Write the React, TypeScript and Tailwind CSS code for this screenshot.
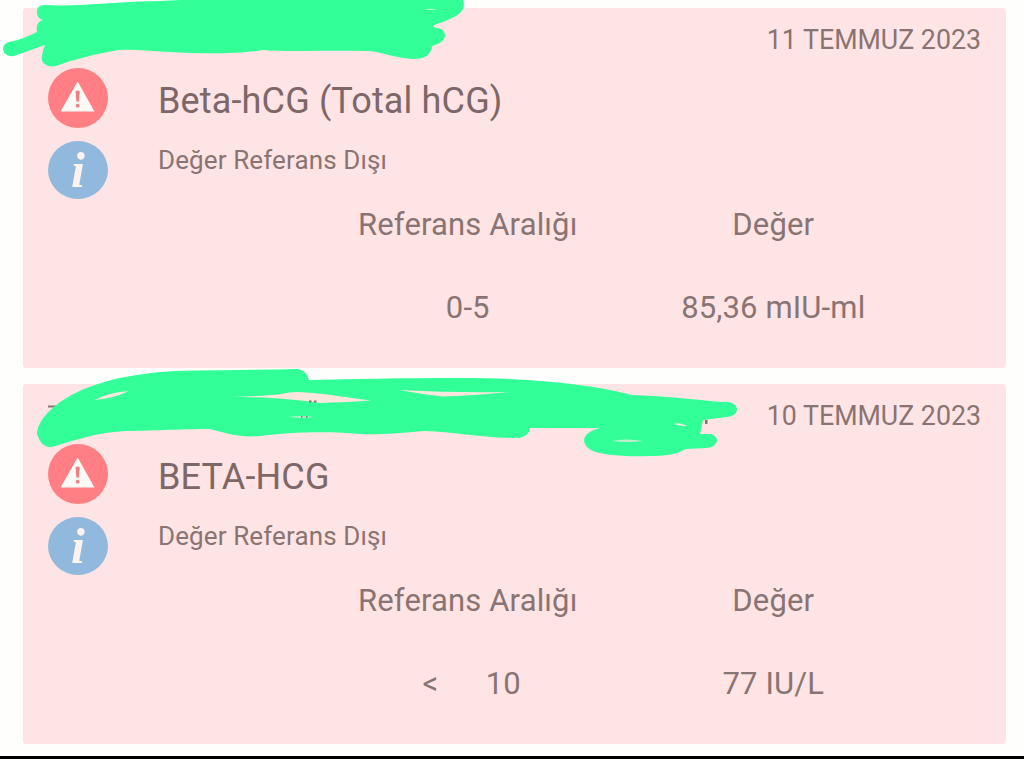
interface LabResult {
  id: number;
  date: string;
  name: string;
  status: string;
  range: string;
  value: string;
}

const results: LabResult[] = [
  {
    id: 1,
    date: "11 TEMMUZ 2023",
    name: "Beta-hCG (Total hCG)",
    status: "Değer Referans Dışı",
    range: "0-5",
    value: "85,36 mIU-ml",
  },
  {
    id: 2,
    date: "10 TEMMUZ 2023",
    name: "BETA-HCG",
    status: "Değer Referans Dışı",
    range: " <\u2003  10",
    value: "77 IU/L",
  },
];

function WarningIcon() {
  return (
    <svg viewBox="0 0 60 60" className="block h-[60px] w-[60px] shrink-0">
      <circle cx="30" cy="30" r="30" fill="#ff7f84" />
      <path d="M29.7 13.5 L46.5 43.5 H12.5 Z" fill="#fffaf5" />
      <path d="M27.6 23.5 Q29.7 21.5 31.8 23.5 L31 33.5 H28.4 Z" fill="#e8807f" />
      <circle cx="29.7" cy="37.7" r="1.9" fill="#e8807f" />
    </svg>
  );
}

function InfoIcon() {
  return (
    <div className="flex h-[58px] w-[60px] shrink-0 items-center justify-center rounded-[50%] bg-[#90b9dd]">
      <span className="font-['Liberation_Serif'] text-[50px] leading-none font-bold text-[#fdf3f1] italic">i</span>
    </div>
  );
}

// Marker strokes hiding the patient details on the first card
function FirstScribble() {
  return (
    <svg viewBox="0 0 1024 80" className="absolute top-0 left-0 h-[80px] w-[1024px]">
      <path
        d="M37 10 Q38 5 45 5 C80 7 120 1 160 1 L180 0 H463 Q466 8 459 14 C450 20 440 23 434 25 Q433 28 438 28 Q445 29 445 36 Q444 43 432 46 C431 55 425 59 413 59 C393 58 380 51 366 51 C330 50 290 52 262 50 C240 54 200 54 170 52 C150 51 130 49 119 50 C95 54 75 59 56 66 Q46 68 42 61 Q41 55 45 45 L14 56 Q5 57 3 50 Q3 43 9 42 C20 40 29 36 37 32 Q35 22 43 20 Q36 18 37 10 Z"
        fill="#33ff99"
      />
      <path d="M425 9.5 Q430 8 437 9.5 Q430 10.5 425 9.5 Z" fill="#b7f5cd" />
    </svg>
  );
}

function SecondScribble() {
  return (
    <svg viewBox="0 360 1024 110" className="absolute top-[360px] left-0 h-[110px] w-[1024px]">
      <path d="M48 406.5 H60" stroke="#8a7474" strokeWidth="2" />
      <path
        d="M37 434 C37 425 44 415 55 406 C80 386 120 374 175 371 C220 370 260 370 298 369 Q307 371 309 380 C350 379 400 378 460 378 C530 378 590 384 632 395 C660 396 690 399 722 402 C732 401 737 405 737 410 Q736 416 727 417 L703 420 L700 434 H711 Q717 436 717 441 Q715 448 706 448 L686 449 C675 455 665 456 650 456 C625 457 600 455 591 450 Q584 446 584 440 Q585 432 600 428 H530 Q529 436 519 438 C480 438 455 432 425 431 C400 433 380 435 360 434 C330 431 290 432 260 436 C240 438 225 433 210 429 C180 429 145 431 125 431 C95 433 75 440 52 447 Q42 449 37 434 Z"
        fill="#33ff99"
      />
      <g fill="#fae6dd">
        <path d="M94 400 Q110 392 129 391 Q112 399 94 400 Z" />
        <path d="M232 397 C250 396 268 396 281 394 Q293 391 306 392.5 C330 394 350 398 371 400.5 Q350 402 320 403 C290 399 270 397 232 397 Z" />
        <path d="M399 390 Q455 393 508 392 Q480 395 443 396.5 Q420 394 399 390 Z" />
        <path d="M288 417 Q301 415 314 417 Q301 418.5 288 417 Z" fill="#b9efcb" />
        <path d="M612 441 Q625 438 643 441 Q630 443 612 441 Z" fill="#c4eecf" />
        <path d="M674 424 Q680 422 687 426 Q680 426.5 674 424 Z" />
      </g>
      <g fill="#87706f">
        <rect x="309" y="400.5" width="2.5" height="2" />
        <rect x="314" y="400.5" width="2.5" height="2" />
        <rect x="301" y="416" width="1.5" height="1.5" />
        <rect x="306" y="416" width="1.5" height="1.5" />
        <rect x="705" y="420" width="2.5" height="4" />
      </g>
    </svg>
  );
}

function ResultCard({ result }: { result: LabResult }) {
  return (
    <div className="h-[360px] rounded-[3px] bg-[#fee4e4] text-[#8a7473]">
      <div className="flex h-[60px] items-center justify-end pt-1 pr-[25px] text-[26.75px]">
        <span>{result.date}</span>
      </div>

      <div className="flex h-[120px] pl-[25px]">
        <div className="flex w-[110px] flex-col gap-[13px]">
          <WarningIcon />
          <InfoIcon />
        </div>
        <div>
          <h2 className="flex h-[66px] items-center text-[36px] tracking-[0.15px] text-[#7d6767]">{result.name}</h2>
          <p className="flex h-[52px] items-center text-[26px] tracking-[0.12px]">{result.status}</p>
        </div>
      </div>

      <div className="ml-[292px] grid w-[611px] grid-cols-2 text-center text-[31px] tracking-[0.14px]">
        <div className="leading-[73px]">Referans Aralığı</div>
        <div className="leading-[73px]">Değer</div>
        <div className="leading-[93px] whitespace-pre">{result.range}</div>
        <div className="leading-[93px]">{result.value}</div>
      </div>
    </div>
  );
}

export default function App() {
  return (
    <div className="relative flex h-[759px] w-[1024px] flex-col overflow-hidden bg-[#fefefd] font-['Roboto',sans-serif]">
      <main className="flex grow flex-col gap-4 pt-2 pr-[18px] pl-[23px]">
        {results.map((result) => (
          <ResultCard key={result.id} result={result} />
        ))}
      </main>
      <div className="h-[3px] bg-black" />
      <FirstScribble />
      <SecondScribble />
    </div>
  );
}
